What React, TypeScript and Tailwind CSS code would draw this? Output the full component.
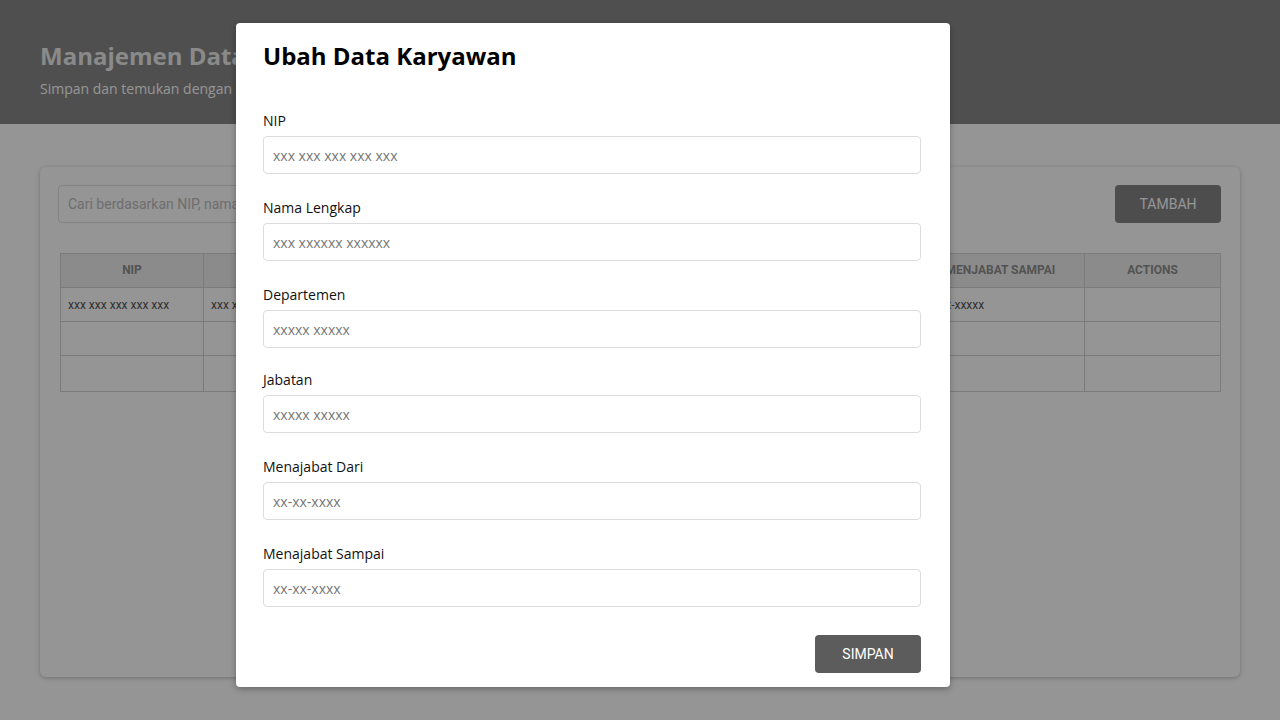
import React from 'react'

const columns = [
    { label: 'NIP', width: 143 },
    { label: 'Nama Lengkap', width: 200 },
    { label: 'Departemen', width: 171 },
    { label: 'Jabatan', width: 171 },
    { label: 'Menjabat Dari', width: 171 },
    { label: 'Menjabat Sampai', width: 168 },
    { label: 'Actions', width: 136 },
]

const rows = [
    ['xxx xxx xxx xxx xxx', 'xxx xxxxxx xxxxxx', 'xxxxx xxxxx', 'xxxxx xxxxx', 'xx-xx-xxxx', 'xx-xx-xxxxx', ''],
    ['', '', '', '', '', '', ''],
    ['', '', '', '', '', '', ''],
]

const fields = [
    { label: 'NIP', placeholder: 'xxx xxx xxx xxx xxx', mt: 'mt-0' },
    { label: 'Nama Lengkap', placeholder: 'xxx xxxxxx xxxxxx', mt: 'mt-6' },
    { label: 'Departemen', placeholder: 'xxxxx xxxxx', mt: 'mt-6' },
    { label: 'Jabatan', placeholder: 'xxxxx xxxxx', mt: 'mt-[22px]' },
    { label: 'Menajabat Dari', placeholder: 'xx-xx-xxxx', mt: 'mt-6' },
    { label: 'Menajabat Sampai', placeholder: 'xx-xx-xxxx', mt: 'mt-6' },
]

function EmployeePage() {
    return (
        <div className="min-h-[720px] bg-white">
            <header className="h-[124px] bg-[#878787] px-10 pt-10 font-['Open_Sans',sans-serif]">
                <h1 className="text-[24px] leading-8 font-bold text-[#ececec]">
                    Manajemen Data Karyawan
                </h1>
                <p className="mt-[7px] text-[14px] leading-5 text-white">
                    Simpan dan temukan dengan mudah data karyawan
                </p>
            </header>

            <div className="px-10 pt-[43px]">
                <div className="h-[510px] rounded-md bg-white pt-[18px] pr-[19px] pl-[18px] shadow-[0_1px_4px_rgba(0,0,0,0.25)] font-['Roboto',sans-serif]">
                    <div className="flex items-center justify-between">
                        <input
                            className="h-[38px] w-[520px] rounded-[4px] border border-[#dedede] px-[9px] text-[14px] placeholder:text-[#bcbcbc] outline-none"
                            placeholder="Cari berdasarkan NIP, nama, departemen..."
                        />
                        <button className="h-[38px] w-[106px] rounded-[4px] bg-[#848484] text-[14px] font-normal text-white">
                            TAMBAH
                        </button>
                    </div>

                    <table className="mx-[2px] mt-[30px] w-[1160px] table-fixed border-collapse">
                        <colgroup>
                            {columns.map((c) => (
                                <col key={c.label} style={{ width: c.width }} />
                            ))}
                        </colgroup>
                        <thead>
                            <tr className="h-[34px] bg-[#eeeeee]">
                                {columns.map((c) => (
                                    <th
                                        key={c.label}
                                        className="border border-[#d2d2d2] pb-[1px] text-center text-[12px] font-bold text-[#8f8f8f] uppercase"
                                    >
                                        {c.label}
                                    </th>
                                ))}
                            </tr>
                        </thead>
                        <tbody>
                            {rows.map((row, i) => (
                                <tr key={i} className={i === rows.length - 1 ? 'h-[36px]' : 'h-[34px]'}>
                                    {row.map((cell, j) => (
                                        <td
                                            key={j}
                                            className="overflow-hidden border border-[#d2d2d2] px-[7px] text-[12px] whitespace-nowrap text-[#555]"
                                        >
                                            {cell}
                                        </td>
                                    ))}
                                </tr>
                            ))}
                        </tbody>
                    </table>
                </div>
            </div>
        </div>
    )
}

function EditModal() {
    return (
        <div className="absolute top-[23px] left-[236px] flex h-[664px] w-[714px] flex-col rounded-[4px] bg-white pt-[17px] pr-[29px] pl-[27px] shadow-[0_2px_6px_rgba(0,0,0,0.3)] font-['Open_Sans',sans-serif]">
            <h2 className="text-[24px] leading-8 font-bold text-black">Ubah Data Karyawan</h2>

            <form className="mt-[39px] flex flex-col">
                {fields.map((f) => (
                    <div key={f.label} className={f.mt}>
                        <label className="block text-[14px] leading-5 text-[#111]">{f.label}</label>
                        <input
                            className="mt-[5px] h-[38px] w-full rounded-[4px] border border-[#dcdcdc] px-[9px] text-[14px] placeholder:text-[#777] outline-none"
                            placeholder={f.placeholder}
                        />
                    </div>
                ))}
                <div className="mt-[28px] flex justify-end">
                    <button
                        type="button"
                        className="h-[38px] w-[106px] rounded-[4px] bg-[#5c5c5c] font-['Roboto',sans-serif] text-[14px] font-normal text-white"
                    >
                        SIMPAN
                    </button>
                </div>
            </form>
        </div>
    )
}

export default function App() {
    return (
        <div className="relative h-[720px] w-[1280px] overflow-hidden">
            <EmployeePage />
            <div className="absolute inset-0 bg-black/[0.415]" />
            <EditModal />
        </div>
    )
}
